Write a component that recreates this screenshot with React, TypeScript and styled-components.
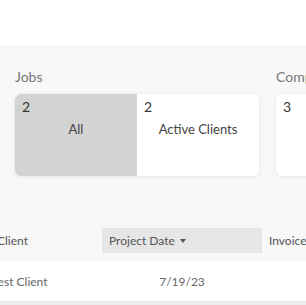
import React from "react";
import styled, { createGlobalStyle } from "styled-components";

const Global = createGlobalStyle`
  html, body { margin: 0; padding: 0; background: #f8f8f8; }
  body { font-family: Lato, "Open Sans", sans-serif; overflow: hidden; }
`;

const Page = styled.div`
  width: 306px;
  height: 305px;
  overflow: hidden;
  background: #f8f8f8;
`;

const TopBar = styled.div`
  height: 46px;
  background: #fff;
  box-shadow: 0 1px 3px rgba(0, 0, 0, 0.05);
`;

const Summary = styled.div`
  display: flex;
  gap: 17px;
  padding: 22px 0 0 15px;
`;

const Group = styled.div`
  display: flex;
  flex-direction: column;
  flex: none;
`;

const GroupLabel = styled.div`
  font-size: 14px;
  line-height: 17px;
  color: #777;
  height: 26px;
`;

const Card = styled.div`
  display: flex;
  width: 244px;
  height: 82px;
  border-radius: 6px;
  overflow: hidden;
  background: #fff;
  box-shadow: 0 1px 4px rgba(0, 0, 0, 0.08);
`;

const Segment = styled.div<{ $active?: boolean; $w: number }>`
  width: ${(p) => p.$w}px;
  flex: none;
  background: ${(p) => (p.$active ? "#d3d3d3" : "#fff")};
  display: flex;
  flex-direction: column;
  padding: 4px 0 0 7px;
  box-sizing: border-box;
`;

const Count = styled.div`
  font-size: 14px;
  line-height: 17px;
  color: #333;
`;

const SegLabel = styled.div`
  font-size: 13px;
  line-height: 16px;
  color: #444;
  text-align: center;
  padding-right: 7px;
  margin-top: 6px;
`;

const TableWrap = styled.div`
  margin-top: 52px;
  overflow: hidden;
`;

const Table = styled.div`
  margin-left: -10px;
  width: 400px;
`;

const Columns = styled.div`
  display: grid;
  grid-template-columns: 112px 160px 1fr;
`;

const HeadRow = styled(Columns)`
  height: 25px;
  align-items: stretch;
`;

const HeadCell = styled.div<{ $sorted?: boolean }>`
  display: flex;
  align-items: center;
  padding-left: 7px;
  font-size: 12px;
  color: #555;
  background: ${(p) => (p.$sorted ? "#e6e6e6" : "transparent")};
`;

const Caret = styled.span`
  display: inline-block;
  width: 0;
  height: 0;
  margin-left: 5px;
  border-left: 3.5px solid transparent;
  border-right: 3.5px solid transparent;
  border-top: 4px solid #555;
`;

const BodyRow = styled(Columns)`
  height: 40px;
  margin-top: 8px;
  background: #fff;
  border-bottom: 4px solid #ececec;
  align-items: center;
`;

const Cell = styled.div<{ $center?: boolean }>`
  font-size: 12px;
  color: #666;
  padding-left: ${(p) => (p.$center ? "0" : "2px")};
  text-align: ${(p) => (p.$center ? "center" : "left")};
`;

export default function App() {
  return (
    <Page>
      <Global />
      <TopBar />
      <Summary>
        <Group>
          <GroupLabel>Jobs</GroupLabel>
          <Card>
            <Segment $active $w={122}>
              <Count>2</Count>
              <SegLabel>All</SegLabel>
            </Segment>
            <Segment $w={122}>
              <Count>2</Count>
              <SegLabel>Active Clients</SegLabel>
            </Segment>
          </Card>
        </Group>
        <Group>
          <GroupLabel>Completed</GroupLabel>
          <Card>
            <Segment $w={122}>
              <Count>3</Count>
              <SegLabel>All</SegLabel>
            </Segment>
          </Card>
        </Group>
      </Summary>
      <TableWrap>
        <Table>
          <HeadRow>
            <HeadCell>Client</HeadCell>
            <HeadCell $sorted>
              Project Date
              <Caret />
            </HeadCell>
            <HeadCell>Invoices</HeadCell>
          </HeadRow>
          <BodyRow>
            <Cell>Test Client</Cell>
            <Cell $center>7/19/23</Cell>
            <Cell />
          </BodyRow>
        </Table>
      </TableWrap>
    </Page>
  );
}
